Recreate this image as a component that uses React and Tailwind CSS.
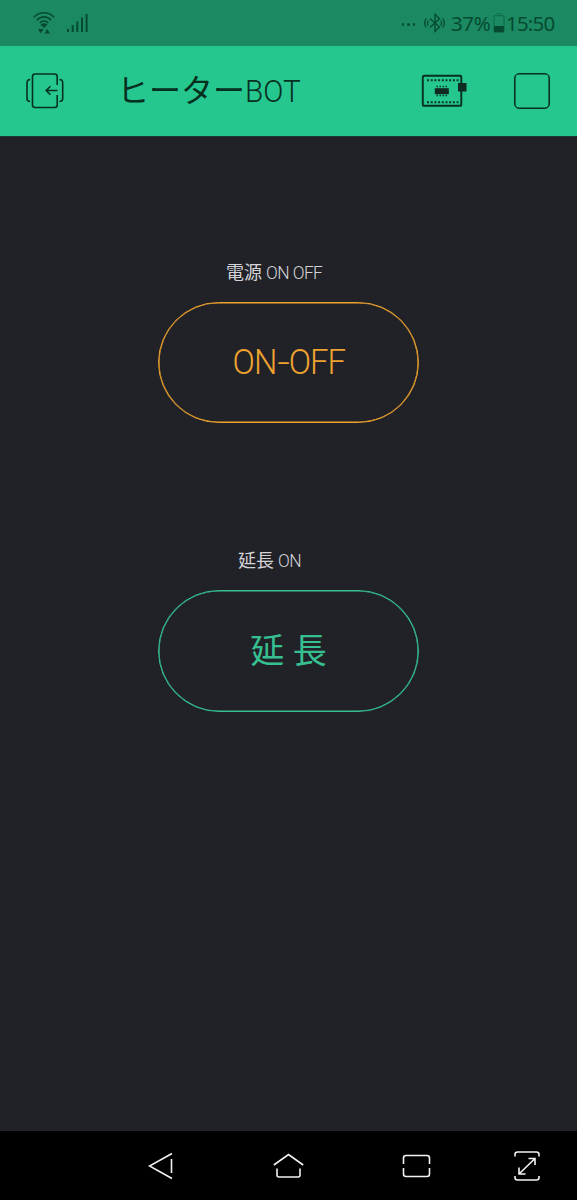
import React from 'react';

const WifiIcon = () => (
    <svg width="22" height="24" viewBox="0 0 22 24" fill="none" stroke="#064a31" strokeWidth="1.6">
        <path d="M.8 6.2C6.5.2 15.500.2 21.200 6.200M3.800 9.200C8 4.800 14 4.800 18.200 9.200M6.700 12C9.200 9.300 12.800 9.300 15.300 12" />
        <path d="M7.500 13.500Q11 11 14.500 13.500L11 17ZM5 18h5.500L7.700 22.500ZM11.500 22.500h5.500L14.200 18Z" fill="#064a31" stroke="none" />
    </svg>
);

const SignalIcon = () => (
    <svg width="22" height="20" viewBox="0 0 22 20" fill="#064a31">
        <rect x="0" y="16" width="2" height="3" />
        <rect x="4.700" y="12" width="2" height="7" />
        <rect x="9.300" y="8.500" width="2" height="10.500" />
        <rect x="14" y="4.500" width="2" height="14.500" />
        <rect x="18.600" y="1" width="2" height="18" />
    </svg>
);

const BluetoothIcon = () => (
    <svg width="22" height="20" viewBox="0 0 22 20" fill="none" stroke="#064a31" strokeWidth="1.300">
        <path d="M6 5.500 15.500 14 11 18.500V1.200L15.500 5.700 6 14.500" />
        <path d="M4.200 7.500Q2.700 10 4.200 12.500M2.200 5.500Q-.8 10 2.200 14.500M16.800 7.500Q18.300 10 16.800 12.500M18.800 5.500Q21.800 10 18.800 14.500" />
    </svg>
);

const BatteryIcon = () => (
    <svg width="12" height="20" viewBox="0 0 12 20" fill="none">
        <path d="M3.500.8h5" stroke="#0f6f4b" strokeWidth="1.200" />
        <rect x="1" y="2.600" width="10" height="16.200" rx="1" stroke="#0f6f4b" strokeWidth="1.200" />
        <rect x="1" y="13" width="10" height="6.300" rx="1" fill="#064a31" />
    </svg>
);

const ExitIcon = () => (
    <svg width="38" height="36" viewBox="0 0 38 36" fill="none" stroke="#07301f" strokeWidth="1.600">
        <path d="M31.200 12V3.500Q31.200 1 28.700 1H9Q6.500 1 6.500 3.500V32Q6.500 34.500 9 34.500H28.700Q31.200 34.500 31.200 32V22" />
        <path d="M4.200 6.500Q1 6.500 1 10V25.500Q1 28.500 4.200 28.500M33.500 6.500Q36.700 6.500 36.700 10V25.500Q36.700 28.500 33.500 28.500" />
        <path d="M31.500 17.500H20.500M24.500 13.200 20.200 17.500 24.500 21.800" />
    </svg>
);

const BoardIcon = () => (
    <svg width="46" height="34" viewBox="0 0 46 34" fill="none">
        <rect x="1.800" y="1.800" width="38.500" height="30" rx="1" stroke="#07301f" strokeWidth="1.900" />
        <path d="M6 6.200H37.500M6 28.200H37.500" stroke="#0b3a28" strokeWidth="2" strokeDasharray="2 1.700" />
        <path d="M15.500 12.500H27.500M15.500 21.500H27.500" stroke="#0b3a28" strokeWidth="1.300" strokeDasharray="1.500 1.500" />
        <rect x="13.800" y="14.200" width="14" height="6" fill="#0f2a22" />
        <rect x="37" y="9" width="8.500" height="8.500" fill="#0f2a22" />
    </svg>
);

const StatusBar = () => (
    <div className="flex h-[46px] items-center bg-[#1b8a63] text-[#064a31]">
        <div className="ml-[33px] h-6"><WifiIcon /></div>
        <div className="ml-3 h-5"><SignalIcon /></div>
        <div className="ml-auto mr-[9px] flex gap-[3px] pt-[3px]">
            <span className="size-[2.500px] rounded-full bg-[#064a31]" />
            <span className="size-[2.500px] rounded-full bg-[#064a31]" />
            <span className="size-[2.500px] rounded-full bg-[#064a31]" />
        </div>
        <BluetoothIcon />
        <span className="ml-[5px] w-[42px] whitespace-nowrap pt-px text-[20.500px] leading-none tracking-[-0.400px]">37%</span>
        <BatteryIcon />
        <span className="ml-px mr-[24px] w-[47px] whitespace-nowrap pt-px text-[20.500px] leading-none tracking-[-0.800px]">15:50</span>
    </div>
);

const Header = () => (
    <header className="flex h-[90px] items-center bg-[#26c78f] text-[#07301f]">
        <div className="ml-[26px]"><ExitIcon /></div>
        <h1 className="ml-[53px] flex items-baseline whitespace-nowrap font-['Roboto','Noto_Sans_CJK_JP',sans-serif] leading-none">
            <span className="text-[32px]">ヒーター</span>
            <span className="w-[54px] origin-left scale-x-[0.93] text-[32px] font-light">BOT</span>
        </h1>
        <div className="ml-auto mr-[47px]"><BoardIcon /></div>
        <div className="mr-[27px] size-[36px] rounded-[5px] border border-[#07301f] shadow-[inset_0_0_0_0.600px_#07301f]" />
    </header>
);

const NavBar = () => (
    <nav className="flex h-[69px] items-center bg-black">
        <svg className="ml-[148px]" width="26" height="28" viewBox="0 0 26 28" fill="none" stroke="#f2f2f2" strokeWidth="1.600">
            <path d="M24 1.500 1.500 14 24 26.500M23.500 7V21" />
        </svg>
        <svg className="ml-[99px]" width="31" height="26" viewBox="0 0 31 26" fill="none" stroke="#f2f2f2" strokeWidth="1.600">
            <path d="M.8 12 15.500 1.500 30.200 12M4 15.500V22Q4 24 6 24H25Q27 24 27 22V15.500" />
        </svg>
        <svg className="ml-[98px]" width="29" height="24" viewBox="0 0 29 24" fill="none" stroke="#f2f2f2" strokeWidth="1.600">
            <path d="M1.500 10V4Q1.500 1.500 4 1.500H25Q27.500 1.500 27.500 4V10M1.500 14V20Q1.500 22.500 4 22.500H25Q27.500 22.500 27.500 20V14" />
        </svg>
        <svg className="ml-[83px]" width="26" height="30" viewBox="0 0 26 30" fill="none" stroke="#f2f2f2" strokeWidth="1.600">
            <path d="M1 5.500V3.500Q1 1 3.500 1H22.500Q25 1 25 3.500V5.500M1 25V26.500Q1 29 3.500 29H22.500Q25 29 25 26.500V25" />
            <path d="M5 23 21 7.500M14.500 7.500H21V14M5 16.500V23H11.500" />
        </svg>
    </nav>
);

export default function App() {
    return (
        <div className="flex h-[1200px] w-[577px] flex-col bg-[#212227] font-['Noto_Sans',sans-serif]">
            <StatusBar />
            <Header />
            <main className="flex flex-1 flex-col items-center border-t border-[#173d30] font-['Roboto','Noto_Sans_CJK_JP',sans-serif]">
                <p className="mt-[126px] flex h-5 w-[125px] items-baseline gap-[4px] whitespace-nowrap text-[18px] leading-5 text-[#d4d4d8]">
                    <span>電源</span>
                    <span className="origin-left scale-x-[0.94] text-[18.500px] font-light tracking-[-0.600px]">ON OFF</span>
                </p>
                <button className="mt-[19px] flex h-[121px] w-[261px] items-center justify-center rounded-full border border-[#efa32f] text-[35px] font-light text-[#efa32f] shadow-[inset_0_0_0_0.600px_#efa32f]">
                    <span className="flex scale-x-[0.94] pt-[2px] tracking-[-1px]">
                        <span>ON</span>
                        <span className="mx-[2px] scale-x-[1.350]">-</span>
                        <span>OFF</span>
                    </span>
                </button>
                <p className="mt-[128px] flex h-5 w-[101px] items-baseline gap-[4px] whitespace-nowrap text-[18px] leading-5 text-[#d4d4d8]">
                    <span>延長</span>
                    <span className="origin-left scale-x-[0.94] text-[18.500px] font-light tracking-[-0.600px]">ON</span>
                </p>
                <button className="mt-[19px] flex h-[122px] w-[261px] items-center justify-center rounded-full border border-[#36c091] text-[34px] text-[#36c091] shadow-[inset_0_0_0_0.600px_#36c091]">
                    延 長
                </button>
            </main>
            <NavBar />
        </div>
    );
}
